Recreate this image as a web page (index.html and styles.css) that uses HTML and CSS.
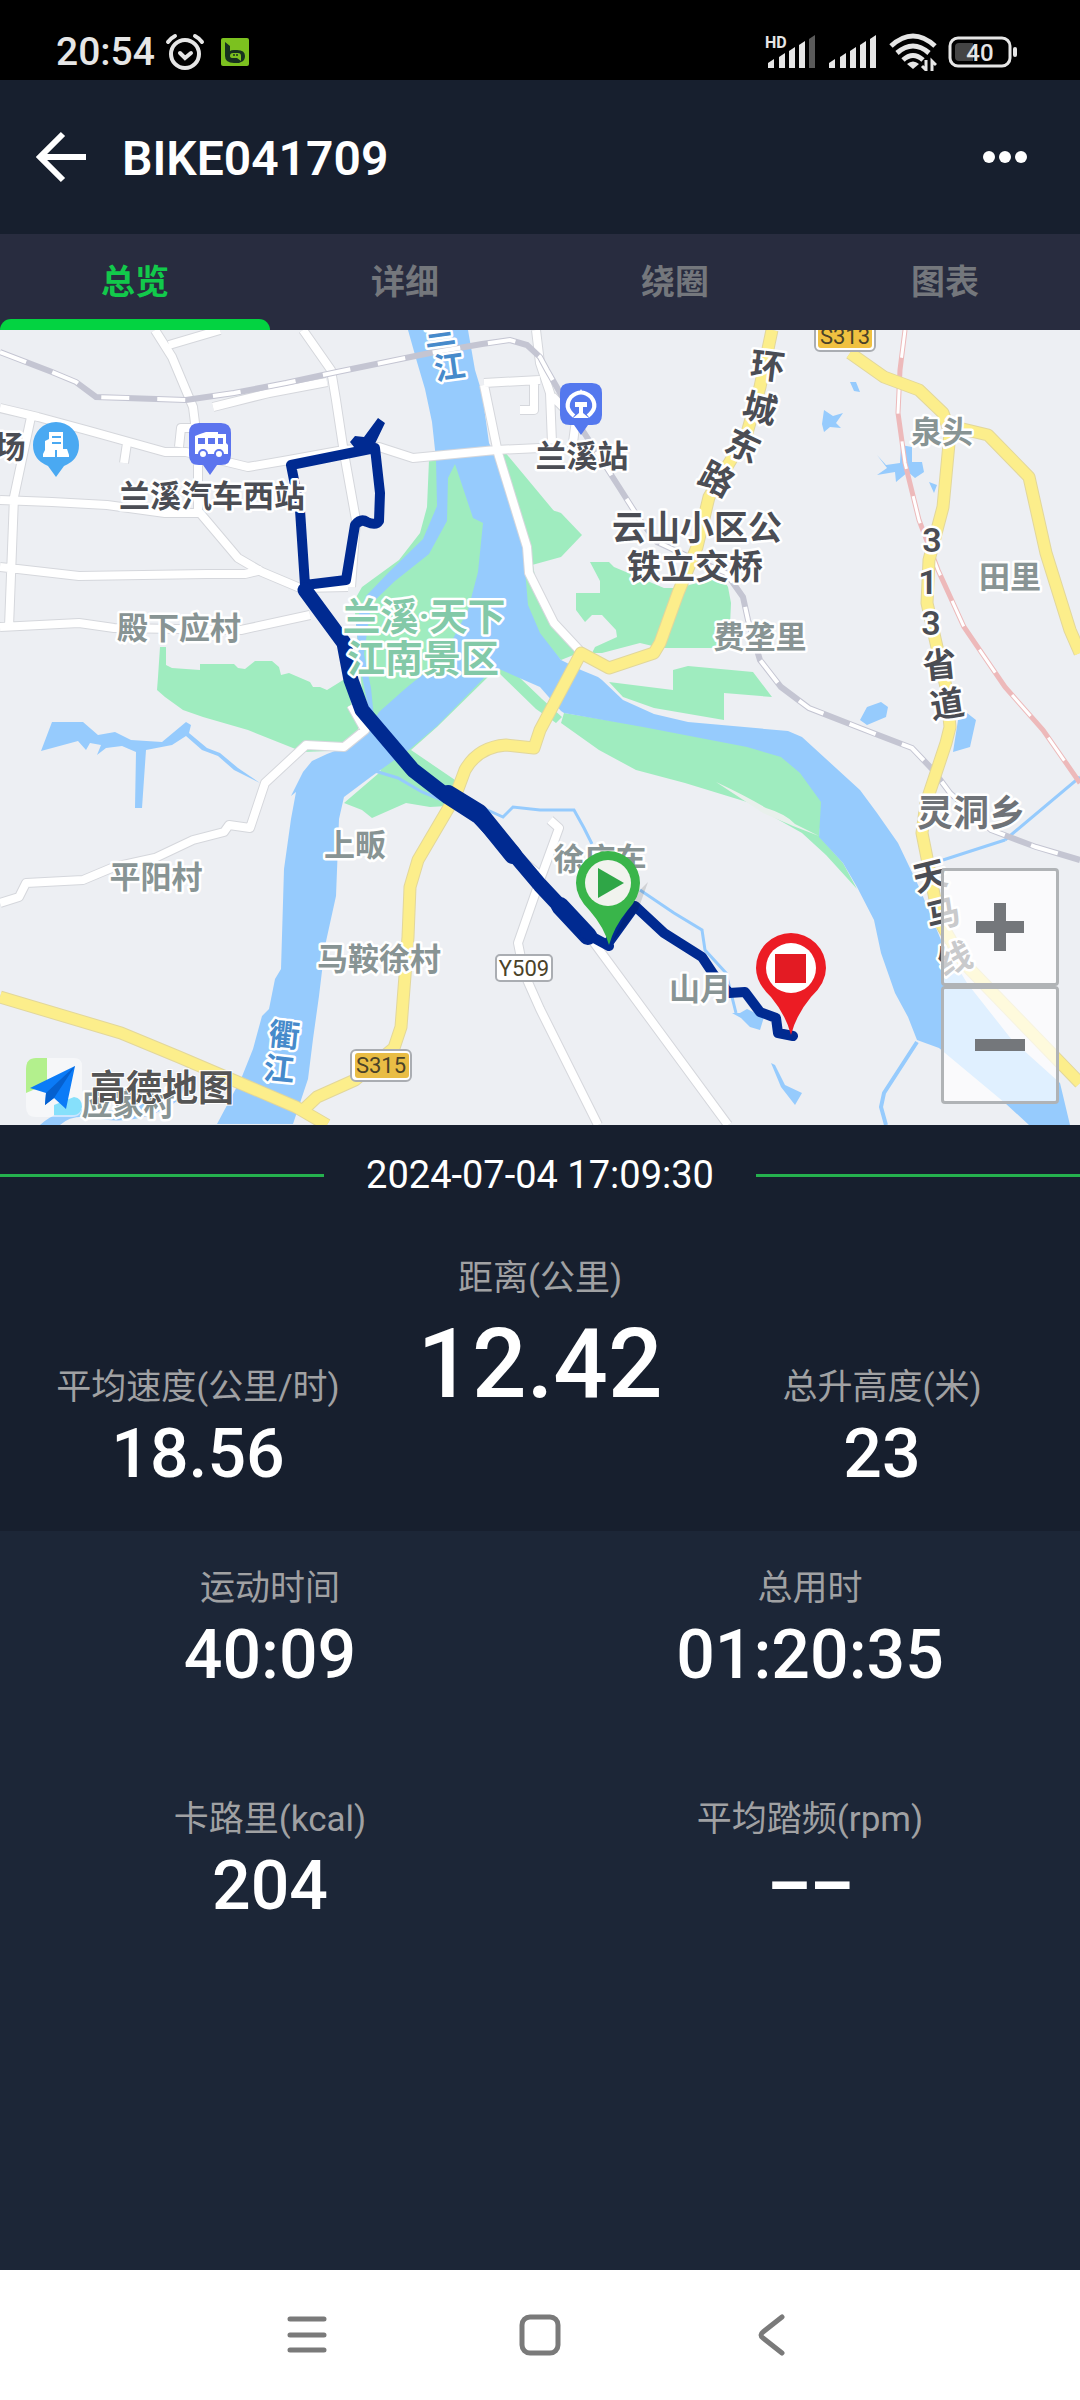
FILE: index.html
```html
<!DOCTYPE html>
<html lang="zh-CN">
<head>
  <meta charset="UTF-8">
  <meta name="viewport" content="width=device-width, initial-scale=1.0">
  <title>BIKE041709</title>
  <link rel="stylesheet" href="styles.css">
</head>
<body>
  <div class="status-bar">
    <span class="clock">20:54</span>
    <svg class="alarm" width="40" height="38" viewBox="0 0 40 38" fill="none" stroke="#e6e6e6" stroke-linecap="round">
      <circle cx="20" cy="21" r="14" stroke-width="4"/>
      <path d="M15 20l5 5 6-5" stroke-width="4"/>
      <path d="M3 9q3-4 7-6M37 9q-3-4-7-6" stroke-width="4"/>
    </svg>
    <svg class="app-badge" width="28" height="28" viewBox="0 0 28 28">
      <rect width="28" height="28" rx="2" fill="#7cc11f"/>
      <path d="M4 4l5 4v5q1-1 4-1h3q8 0 8 6 0 5-4 6l-2 1h-5q-9 0-9-7z" fill="#16311f"/>
      <path d="M12 15h5q3 0 3 3v5l-4-3h-4q-3 0-3-2 0-3 3-3z" fill="#7cc11f"/>
      <circle cx="13" cy="17" r="1" fill="#16311f"/>
      <circle cx="16" cy="17" r="1" fill="#16311f"/>
    </svg>
    <div class="status-right">
      <svg width="52" height="34" viewBox="0 0 52 34" fill="#e6e6e6">
        <text class="hd" x="0" y="13">HD</text>
        <path d="M3 33v-5l6-4v9zM14 33V22l6-4v15zM24 33V16l6-4v21zM34 33V10l6-4v27z"/>
        <path d="M44 33V4l6-4v33z" fill="#5a5a5a"/>
      </svg>
      <svg width="50" height="34" viewBox="0 0 50 34" fill="#e6e6e6">
        <path d="M1 33v-5l6-4v9zM12 33V22l6-4v15zM22 33V16l6-4v21zM32 33V10l6-4v27zM42 33V4l6-4v33z"/>
      </svg>
      <svg width="48" height="38" viewBox="0 0 48 38" fill="none" stroke="#e6e6e6" stroke-width="5">
        <path d="M2 13q22-20 44 0"/>
        <path d="M8 20q16-14 32 0"/>
        <path d="M14 27q10-9 20 0"/>
        <path d="M24 36l-6-5q6-5 12 0z" fill="#e6e6e6" stroke="none"/>
        <path d="M37 27v10l-4-4M43 38V28l4 4" stroke-width="3"/>
      </svg>
      <svg width="70" height="32" viewBox="0 0 70 32">
        <rect x="2" y="2" width="60" height="28" rx="8" fill="none" stroke="#e6e6e6" stroke-width="3"/>
        <path d="M11 7h14v18H11q-4 0-4-4V11q0-4 4-4z" fill="#444"/>
        <rect x="65" y="11" width="4" height="10" rx="2" fill="#e6e6e6"/>
        <text class="battery" x="32" y="25" text-anchor="middle">40</text>
      </svg>
    </div>
  </div>

  <header class="header">
    <button class="icon-btn" aria-label="返回">
      <svg width="52" height="52" viewBox="0 0 52 52" fill="none" stroke="#fff" stroke-width="6">
        <path d="M28 3L5 26l23 23M5 26h46"/>
      </svg>
    </button>
    <h1>BIKE041709</h1>
    <button class="icon-btn" aria-label="更多">
      <svg width="46" height="14" viewBox="0 0 46 14" fill="#fff">
        <circle cx="7" cy="7" r="6"/>
        <circle cx="23" cy="7" r="6"/>
        <circle cx="39" cy="7" r="6"/>
      </svg>
    </button>
  </header>

  <nav class="tabs">
    <button class="tab active">总览</button>
    <button class="tab">详细</button>
    <button class="tab">绕圈</button>
    <button class="tab">图表</button>
  </nav>

  <div class="map">
    <svg class="map-canvas" viewBox="0 0 1080 795">
      <rect width="1080" height="795" fill="#edeff3"/>

      <!-- parks -->
      <g class="park">
        <path d="M160 317h6v18l6 3 28 2v-6h34l4 4 7 1 10-8h17l7 6 2 8 8-2 21 9 3 5h7l7 3 21-13 3 26 7 17v20l-3 10-52 2-55-22-45-13-20-7-18-13-8-7 1-13z"/>
        <path d="M429 130l-2 47-7 26-21 27-37 27-8 14 8 90 12 26 20 4 80-50 80-160-50-60z"/>
        <path d="M492 343l-55 54-26 23 44 30-8 26-17 1-24-4-34 15-10-8-18-7 35-30 32-53z"/>
        <path d="M492 343l8-14 42 40 20 18-6 6-20-14-37-36z"/>
        <path d="M497 133l8 2 28 100 7 40 14 22 27 25-20 8-36-40z"/>
        <path d="M516 186q25-12 45-3l21 22-21 22-29 8z"/>
        <path d="M590 232h19l5 5 50 21h14l19-5 22-10 9 14 3 16-2 45h-68l-21-5-38 10h-10l3-6 22-10-1-7-14-15h-10l-7 7-9-12v-17h24v-12z"/>
        <path d="M609 352l64 8v-20l15-4 65 6 19 25-48-4v27l-70-12-31-11z"/>
        <path d="M561 393l3-10 79 13 104 18 34 10 22 19 20 29-4 34 24 27 14 26-31-34-24-22-55-31-62-19-49-13-37-20z"/>
      </g>

      <!-- rivers and ponds -->
      <g class="water">
        <path d="M408 0h60l7 40 7 23 7 50 10 20 24 82 5 60 12 28 21 27 20 10 17 7 4 3 21 20 31 14 34 8 100 9 14 6 58 53 17 23 21 30 21 44 22 53 26 43 45 57 48 43 10 42h-41l-24-22-66-55-22-8-9-23-13-24-14-40-7-33-17-33-14-24-24-26 2-35-21-29-19-16-34-10-104-20-79-14-3-2-21-24-41-18-13 7-49 50-27 23-38 27-28 21-5 22-3 77-11 50-6 50-6 43-5 40-15 45h-76l24-45 12-30 9-33 7-7 6-30 6-10 3-100 7-50 5-27-5 4 12-24 9-11 15-7 21-8 20-17 11-17 27-24 37-30 25-48 10-38 5-49-10-5-18-54-7 14-1 43-18 33-34 27-24 23-7 50 7 34 3 30-4-2-10-50-4-44 10-26 23-24 34-33 14-33-1-47-4-37-7-33-8-27z"/>
        <path d="M52 392h31l15 13 17-3 16 8 31 2 24-20 5 3-2 8 18 15 13 5 18 15 22 15-26-13-16-14-16-6-16-14-14 9-26 5-4 58h-7l1-56-14-6-16 2-9 7 4-10-11-2-4 7-8-9-37 10z"/>
        <path d="M850 52l6 0 4 10-6-1zM824 80l9 6 10-3-7 10 5 5-11-1-6 5-2-8zM877 125l9 10 14-2 1-18 11 2v15h10l2 10-9 6-7-6-12 10-1-10-18 3 10-7zM929 152l8 3-3 8z"/>
        <path d="M860 390l7-13 14-5 7 5-2 10-19 8zM958 390l9-7 9 7-6 27-17 5z"/>
        <path d="M732 683l8 0 7-4 17 8-4 13-10-3-9-9zM771 733l10 24 14 18 7-12-17-8-10-20z"/>
        <path d="M40 795q20-18 50-16 40 8 80-20l20-14-10 24q-40 30-90 18-20-2-30 8z"/>
      </g>
      <g class="stream">
        <path d="M375 441l23 7 24 14 20 8M472 473l31 14 10-10 27 3 34 0 10 18 8 16M640 560l34 23 28 17 3 20 21 23 10 40"/>
        <path d="M917 712l-33 51-3 14 5 18" stroke-width="4"/>
        <path d="M943 530l62-20M1005 510l75-63"/>
      </g>
      <path d="M716 452q30 14 50 26 20 6 29 16l24 12-26-10-30-13z" fill="#e9f0ec"/>

      <!-- minor roads: casing first, then fill -->
      <g class="road-case">
        <path d="M0 78l38 9 48 13 79 22h21l62 15 41-7 55-10 35-3 34 11 83-8 44-2M31 87L14 167 9 297M0 170l52 2 55 3 58 8h35l38 45 24 14 38 16 48-1M0 237l79 9 128-2h38l17-4M0 297l79-4 35 5 127 2 69-15M155 0l17 27 21 50 5 40v68M169 15l51-15M303 0l28 40 5 30 8 53 12 67-5 67M213 77l56-14 58-11M124 133l3-20M179 117l2-19h14M484 53l56-3M484 55l14 68 29 94 2 26 25 50 27 29M520 80h14v-28M536 0l4 33 10 30 2 50M552 66l24 24-4 30"/>
        <path d="M0 573l19-6 7-14 57-3 31-13 41-9 38-18 31-8 5-7 21 3 15-45 41-38 38 2 21-17-14-25M550 490l9 8-19 52-22 63 6 30 16 36 58 116M518 527l19 16M592 610l136 185"/>
      </g>
      <g class="road-fill">
        <path d="M0 78l38 9 48 13 79 22h21l62 15 41-7 55-10 35-3 34 11 83-8 44-2M31 87L14 167 9 297M0 170l52 2 55 3 58 8h35l38 45 24 14 38 16 48-1M0 237l79 9 128-2h38l17-4M0 297l79-4 35 5 127 2 69-15M155 0l17 27 21 50 5 40v68M169 15l51-15M303 0l28 40 5 30 8 53 12 67-5 67M213 77l56-14 58-11M124 133l3-20M179 117l2-19h14M484 53l56-3M484 55l14 68 29 94 2 26 25 50 27 29M520 80h14v-28M536 0l4 33 10 30 2 50M552 66l24 24-4 30"/>
        <path d="M0 573l19-6 7-14 57-3 31-13 41-9 38-18 31-8 5-7 21 3 15-45 41-38 38 2 21-17-14-25M550 490l9 8-19 52-22 63 6 30 16 36 58 116M518 527l19 16M592 610l136 185"/>
      </g>

      <!-- railways -->
      <g fill="none">
        <path d="M0 22l52 20 24 10 20 15 90 3 48-7 52-10 51-11 93-19 52-9 28-4 17 5 13 12 7 13 27 47 45 70 21 33 17 22 28 13 41 18 17 24 5 23 12 40 21 27 28 21 51 20 52 20 21 22 17 23 41 37 45 17 44 13" stroke="#c4c5d2" stroke-width="6"/>
        <path d="M0 22l52 20 24 10 20 15 90 3 48-7 52-10 51-11 93-19 52-9 28-4 17 5 13 12 7 13 27 47 45 70 21 33 17 22 28 13 41 18 17 24 5 23 12 40 21 27 28 21 51 20 52 20 21 22 17 23 41 37 45 17 44 13" stroke="#fff" stroke-width="4" stroke-dasharray="28 28"/>
        <path d="M905 0l-5 40-2 43 7 50 14 57 19 50 26 57 41 60 38 43 37 53" stroke="#edb9ba" stroke-width="5"/>
        <path d="M905 0l-5 40-2 43 7 50 14 57 19 50 26 57 41 60 38 43 37 53" stroke="#fff" stroke-width="3" stroke-dasharray="28 28"/>
      </g>

      <!-- main roads -->
      <g class="main-case">
        <path d="M772 0l-12 57-13 46-38 64-12 50-19 46-18 50-6 10-45 15-28-15-41 77-6 18-28-3q-28 2-41 25l-10 27-37 63-8 27-2 50-7 90-7 21-39 32-38 17-17 16"/>
        <path d="M0 667l121 36 58 24 117 50 31 18M850 23l34 24 35 13 24 23 7 20-7 74-14 53-2 43 19 84 4 40-4 16-20 60-4 30 4 20 13 67 25 43 116 120M946 95l42 10 41 42 17 76 24 77 10 23"/>
      </g>
      <g class="main-fill">
        <path d="M772 0l-12 57-13 46-38 64-12 50-19 46-18 50-6 10-45 15-28-15-41 77-6 18-28-3q-28 2-41 25l-10 27-37 63-8 27-2 50-7 90-7 21-39 32-38 17-17 16"/>
        <path d="M0 667l121 36 58 24 117 50 31 18M850 23l34 24 35 13 24 23 7 20-7 74-14 53-2 43 19 84 4 40-4 16-20 60-4 30 4 20 13 67 25 43 116 120M946 95l42 10 41 42 17 76 24 77 10 23"/>
      </g>

      <!-- recorded track -->
      <g class="track">
        <path d="M305 255l41-5 9-55q6-7 12-3 9 4 12-1l1-28-5-45-84 17 9 45 5 75"/>
        <path d="M378 88l7 5-13 27-14 2-8-10 5-6 9 1z" fill="#002a91" stroke="none"/>
        <path d="M305 260l39 53 7 37 11 30 17 20 34 40 35 27 31 20 34 36 27 32 45 48" stroke-width="15"/>
        <path d="M448 464l31 19 34 42M560 576l28 30" stroke-width="18"/>
        <path d="M585 603l24 13M609 612l26-36 29 27 38 24 12 18 15 18 16-1 15 20 16 6 2 15 15 3"/>
      </g>

      <!-- place names -->
      <g class="label poi">
        <text x="10" y="128">场</text>
        <text x="212" y="177">兰溪汽车西站</text>
        <text x="582" y="137">兰溪站</text>
      </g>
      <g class="label poi big">
        <text x="697" y="210">云山小区公</text>
        <text x="695" y="249">铁立交桥</text>
      </g>
      <g class="label village">
        <text x="179" y="309">殿下应村</text>
        <text x="156" y="558">平阳村</text>
        <text x="355" y="526">上畈</text>
        <text x="379" y="640">马鞍徐村</text>
        <text x="942" y="113">泉头</text>
        <text x="1010" y="258">田里</text>
        <text x="760" y="318">费垄里</text>
        <text x="600" y="540">徐店车</text>
        <text x="700" y="670">山月</text>
        <text x="128" y="785">应家村</text>
      </g>
      <text class="label town" x="971" y="496">灵洞乡</text>
      <g class="label scenic">
        <text x="424" y="300">兰溪·天下</text>
        <text x="423" y="342">江南景区</text>
      </g>
      <g class="label river">
        <text transform="translate(441 14) rotate(-8)">兰</text>
        <text transform="translate(451 48) rotate(-8)">江</text>
        <text transform="translate(283 716) rotate(6)">衢</text>
        <text transform="translate(278 750) rotate(6)">江</text>
      </g>
      <g class="label street">
        <text transform="translate(766 48) rotate(7)">环</text>
        <text transform="translate(757 90) rotate(14)">城</text>
        <text transform="translate(738 127) rotate(25)">东</text>
        <text transform="translate(711 160) rotate(28)">路</text>
        <text x="932" y="222">3</text>
        <text x="928" y="264">1</text>
        <text x="931" y="305">3</text>
        <text transform="translate(941 347) rotate(-6)">省</text>
        <text transform="translate(949 386) rotate(-9)">道</text>
        <text transform="translate(933 558) rotate(-14)">天</text>
        <text transform="translate(946 596) rotate(-14)">马</text>
        <text transform="translate(959 640) rotate(-20)">线</text>
      </g>

      <!-- road numbers -->
      <g class="shield">
        <rect x="815" y="-12" width="60" height="33" rx="5" fill="#fff" stroke="#aaadb2" stroke-width="2"/>
        <rect x="818" y="-9" width="54" height="27" rx="3" fill="#f0c140"/>
        <text x="845" y="14">S313</text>
        <rect x="351" y="720" width="60" height="31" rx="5" fill="#fff" stroke="#aaadb2" stroke-width="2"/>
        <rect x="355" y="723" width="54" height="25" rx="3" fill="#e9bd45"/>
        <text x="381" y="743">S315</text>
        <rect x="496" y="625" width="56" height="26" rx="4" fill="#fff" stroke="#aaadb2" stroke-width="2"/>
        <text x="524" y="646">Y509</text>
      </g>

      <!-- POI pins -->
      <g>
        <path d="M56 147l-8-11q-15-6-15-21a23 23 0 0 1 46 0q0 15-15 21z" fill="#4aa9f2"/>
        <path d="M43 127v-3l2-4v-9l4-2v-7h14v17h4l2 6v2z" fill="#fff"/>
        <path d="M52 107h9M52 113h9M56 120v7" stroke="#4aa9f2" stroke-width="2"/>
        <path d="M210 145l-7-10h-4q-10 0-10-10V103q0-10 10-10h22q10 0 10 10v22q0 10-10 10h-4z" fill="#5c74ee"/>
        <path d="M195 106l5-2 6-2h12v2h8v9l2 2v9h-33z" fill="#fff"/>
        <path d="M198 108h7v6h-7zM208 108h7v6h-7zM218 108h5v6h-5z" fill="#5c74ee"/>
        <circle cx="203" cy="124" r="4" fill="#fff" stroke="#5c74ee" stroke-width="2"/>
        <circle cx="219" cy="124" r="4" fill="#fff" stroke="#5c74ee" stroke-width="2"/>
        <path d="M581 105l-7-10h-4q-10 0-10-10V63q0-10 10-10h22q10 0 10 10v22q0 10-10 10h-4z" fill="#5478ee"/>
        <path d="M574 86q-11-9-3-19 10-9 20 0 8 10-3 19" fill="none" stroke="#fff" stroke-width="4"/>
        <path d="M579 63l2-4 2 4zM575 72h12v5h-4v6l6 5h-16l6-5v-6h-4z" fill="#fff"/>
      </g>

      <!-- start and finish -->
      <g>
        <path d="M612 612l26-32 10-28-14 14z" fill="#000" opacity=".12"/>
        <path d="M609 615q-5-18-19-34-14-14-14-28a32 32 0 0 1 64 0q0 14-13 28-13 16-18 34z" fill="#39b54a"/>
        <circle cx="608" cy="553" r="23" fill="#f1f3ee"/>
        <path d="M598 538l26 15-26 15z" fill="#2fa647"/>
        <path d="M791 705q-5-20-20-38-15-14-15-29a35 35 0 0 1 70 0q0 15-15 29-15 18-20 38z" fill="#ec1c24"/>
        <circle cx="791" cy="638" r="25" fill="#fff"/>
        <path d="M775 624h31v29h-31z" fill="#e31b23"/>
      </g>

      <!-- map provider logo -->
      <g>
        <path d="M26 767v-29q0-10 10-10h38q8 0 8 8v40q0 11-10 11H36q-10 0-10-10z" fill="#fff" opacity=".5"/>
        <path d="M26 763v-24q0-11 10-11h11v26z" fill="#b3f08d"/>
        <path d="M54 775l20-8q8 1 8 10-2 8-8 8H54z" fill="#86e0fb"/>
        <path d="M30 758l45-22-9 43-12-11-9 7 1-12z" fill="#0b7bf7"/>
        <path d="M75 736l-29 27-1 12 9-7z" fill="#0560cf"/>
        <text class="provider" x="90" y="771">高德地图</text>
      </g>
    </svg>
    <div class="zoom">
      <button aria-label="放大">
        <svg width="50" height="50" viewBox="0 0 50 50"><path d="M25 1v48M1 25h48" stroke="#74777b" stroke-width="12"/></svg>
      </button>
      <button aria-label="缩小">
        <svg width="50" height="50" viewBox="0 0 50 50"><path d="M0 25h50" stroke="#74777b" stroke-width="12"/></svg>
      </button>
    </div>
  </div>

  <section class="summary">
    <div class="date"><time datetime="2024-07-04T17:09:30">2024-07-04 17:09:30</time></div>
    <div class="summary-grid">
      <div class="stat">
        <div class="name">平均速度(公里/时)</div>
        <div class="value">18.56</div>
      </div>
      <div class="stat main">
        <div class="name">距离(公里)</div>
        <div class="value">12.42</div>
      </div>
      <div class="stat">
        <div class="name">总升高度(米)</div>
        <div class="value">23</div>
      </div>
    </div>
  </section>

  <section class="details">
    <div class="stat">
      <div class="name">运动时间</div>
      <div class="value">40:09</div>
    </div>
    <div class="stat">
      <div class="name">总用时</div>
      <div class="value">01:20:35</div>
    </div>
    <div class="stat">
      <div class="name">卡路里(kcal)</div>
      <div class="value">204</div>
    </div>
    <div class="stat">
      <div class="name">平均踏频(rpm)</div>
      <div class="value empty">––</div>
    </div>
  </section>

  <nav class="system-nav">
    <button aria-label="菜单">
      <svg width="42" height="42" viewBox="0 0 42 42" stroke="#7a7a7a" stroke-width="5" stroke-linecap="round">
        <path d="M4 5h34M4 21h34M4 36h34"/>
      </svg>
    </button>
    <button aria-label="主页">
      <svg width="42" height="42" viewBox="0 0 42 42" fill="none" stroke="#7a7a7a" stroke-width="5">
        <rect x="3" y="3" width="36" height="36" rx="8"/>
      </svg>
    </button>
    <button aria-label="后退">
      <svg width="42" height="42" viewBox="0 0 42 42" fill="none" stroke="#7a7a7a" stroke-width="5" stroke-linecap="round">
        <path d="M30 3L11 18q-4 3 0 6l19 15"/>
      </svg>
    </button>
  </nav>
</body>
</html>
```

FILE: styles.css
```css
* {
  box-sizing: border-box;
}
body {
  display: flex;
  flex-direction: column;
  min-height: 100vh;
  margin: 0;
  background: #1c2637;
  color: #fff;
  font-family: Roboto, "Noto Sans CJK SC", sans-serif;
}
button {
  padding: 0;
  border: 0;
  background: none;
  color: inherit;
  font: inherit;
}
svg {
  display: block;
}

.status-bar {
  display: flex;
  align-items: center;
  height: 80px;
  padding: 24px 62px 0 56px;
  background: #000;
  color: #e6e6e6;
}
.clock {
  font-size: 39px;
  font-weight: 500;
}
.alarm {
  margin-left: 10px;
}
.app-badge {
  margin-left: 16px;
}
.status-right {
  display: flex;
  align-items: center;
  gap: 11px;
  margin-left: auto;
}
.hd {
  font-size: 16px;
  font-weight: 700;
}
.battery {
  fill: #e6e6e6;
  font-size: 24px;
  font-weight: 500;
}

.header {
  display: flex;
  align-items: center;
  height: 154px;
  padding: 0 52px 0 35px;
  background: #171f2e;
}
.header h1 {
  flex: 1;
  margin: 0 0 0 35px;
  padding-top: 3px;
  font-size: 48px;
  font-weight: 600;
  line-height: 56px;
}

.tabs {
  display: flex;
  height: 96px;
  background: #282c3f;
}
.tab {
  position: relative;
  flex: 1;
  color: #74777c;
  font-size: 34px;
  font-weight: 600;
  line-height: 40px;
}
.tab.active {
  color: #12c94b;
}
.tab.active::after {
  content: "";
  position: absolute;
  left: 0;
  right: 0;
  bottom: 0;
  height: 11px;
  border-radius: 11px 11px 0 0;
  background: #03d341;
}

.map {
  position: relative;
}
.map-canvas {
  width: 100%;
}
.park {
  fill: #9fecbf;
}
.water {
  fill: #96cbfd;
}
.stream {
  fill: none;
  stroke: #96cbfd;
  stroke-width: 3;
}
.road-case,
.road-fill,
.main-case,
.main-fill,
.track {
  fill: none;
  stroke-linejoin: round;
}
.road-case {
  stroke: #d5d7dc;
  stroke-width: 10;
}
.road-fill {
  stroke: #fff;
  stroke-width: 8;
}
.main-case {
  stroke: #e2d79b;
  stroke-width: 13;
}
.main-fill {
  stroke: #fcee8b;
  stroke-width: 11;
}
.track {
  stroke: #002a91;
  stroke-width: 10;
  stroke-linecap: round;
}
.label {
  font-size: 31px;
  font-weight: 600;
  text-anchor: middle;
  paint-order: stroke;
  stroke: #fff;
  stroke-width: 5;
  stroke-linejoin: round;
}
.poi {
  fill: #4b4d54;
}
.big {
  font-size: 34px;
}
.village {
  fill: #889494;
}
.town {
  fill: #6f7378;
  font-size: 36px;
}
.scenic {
  fill: #83c9a8;
  font-size: 38px;
}
.river {
  fill: #468acb;
}
.street {
  fill: #4b4d54;
  font-size: 34px;
}
.shield text {
  fill: #4a4228;
  font-size: 22px;
  text-anchor: middle;
}
.provider {
  font-size: 36px;
  font-weight: 700;
  fill: #555;
  stroke: #fff;
  stroke-width: 2;
  paint-order: stroke;
}
.zoom {
  position: absolute;
  right: 21px;
  bottom: 21px;
  display: flex;
  flex-direction: column;
}
.zoom button {
  display: flex;
  align-items: center;
  justify-content: center;
  width: 118px;
  height: 118px;
  border: 3px solid #b0b3b6;
  border-radius: 4px;
  background: rgba(255, 255, 255, 0.7);
}

.summary {
  padding-bottom: 36px;
  background: #171f2e;
}
.date {
  display: flex;
  align-items: center;
  padding-top: 25px;
  font-size: 38px;
  line-height: 50px;
}
.date::before,
.date::after {
  content: "";
  flex: 1;
  height: 3px;
  background: #25b14e;
}
.date time {
  width: 40%;
  text-align: center;
}
.summary-grid {
  display: grid;
  grid-template-columns: repeat(3, 1fr);
  align-items: end;
  padding: 54px 27px 0;
}
.stat {
  text-align: center;
}
.name {
  color: #a0a1a3;
  font-size: 35px;
  line-height: 50px;
  white-space: nowrap;
}
.value {
  font-size: 68px;
  font-weight: 500;
  line-height: 82px;
}
.main {
  padding-bottom: 70px;
}
.main .value {
  font-size: 96px;
  line-height: 121px;
}
.empty {
  font-weight: 700;
}

.details {
  flex: 1;
  display: grid;
  grid-template-columns: 1fr 1fr;
  align-content: start;
  row-gap: 99px;
  padding-top: 33px;
  background: #1c2637;
}

.system-nav {
  display: flex;
  justify-content: center;
  height: 130px;
  background: #fff;
}
.system-nav button {
  display: flex;
  align-items: center;
  justify-content: center;
  width: 233px;
}
```
